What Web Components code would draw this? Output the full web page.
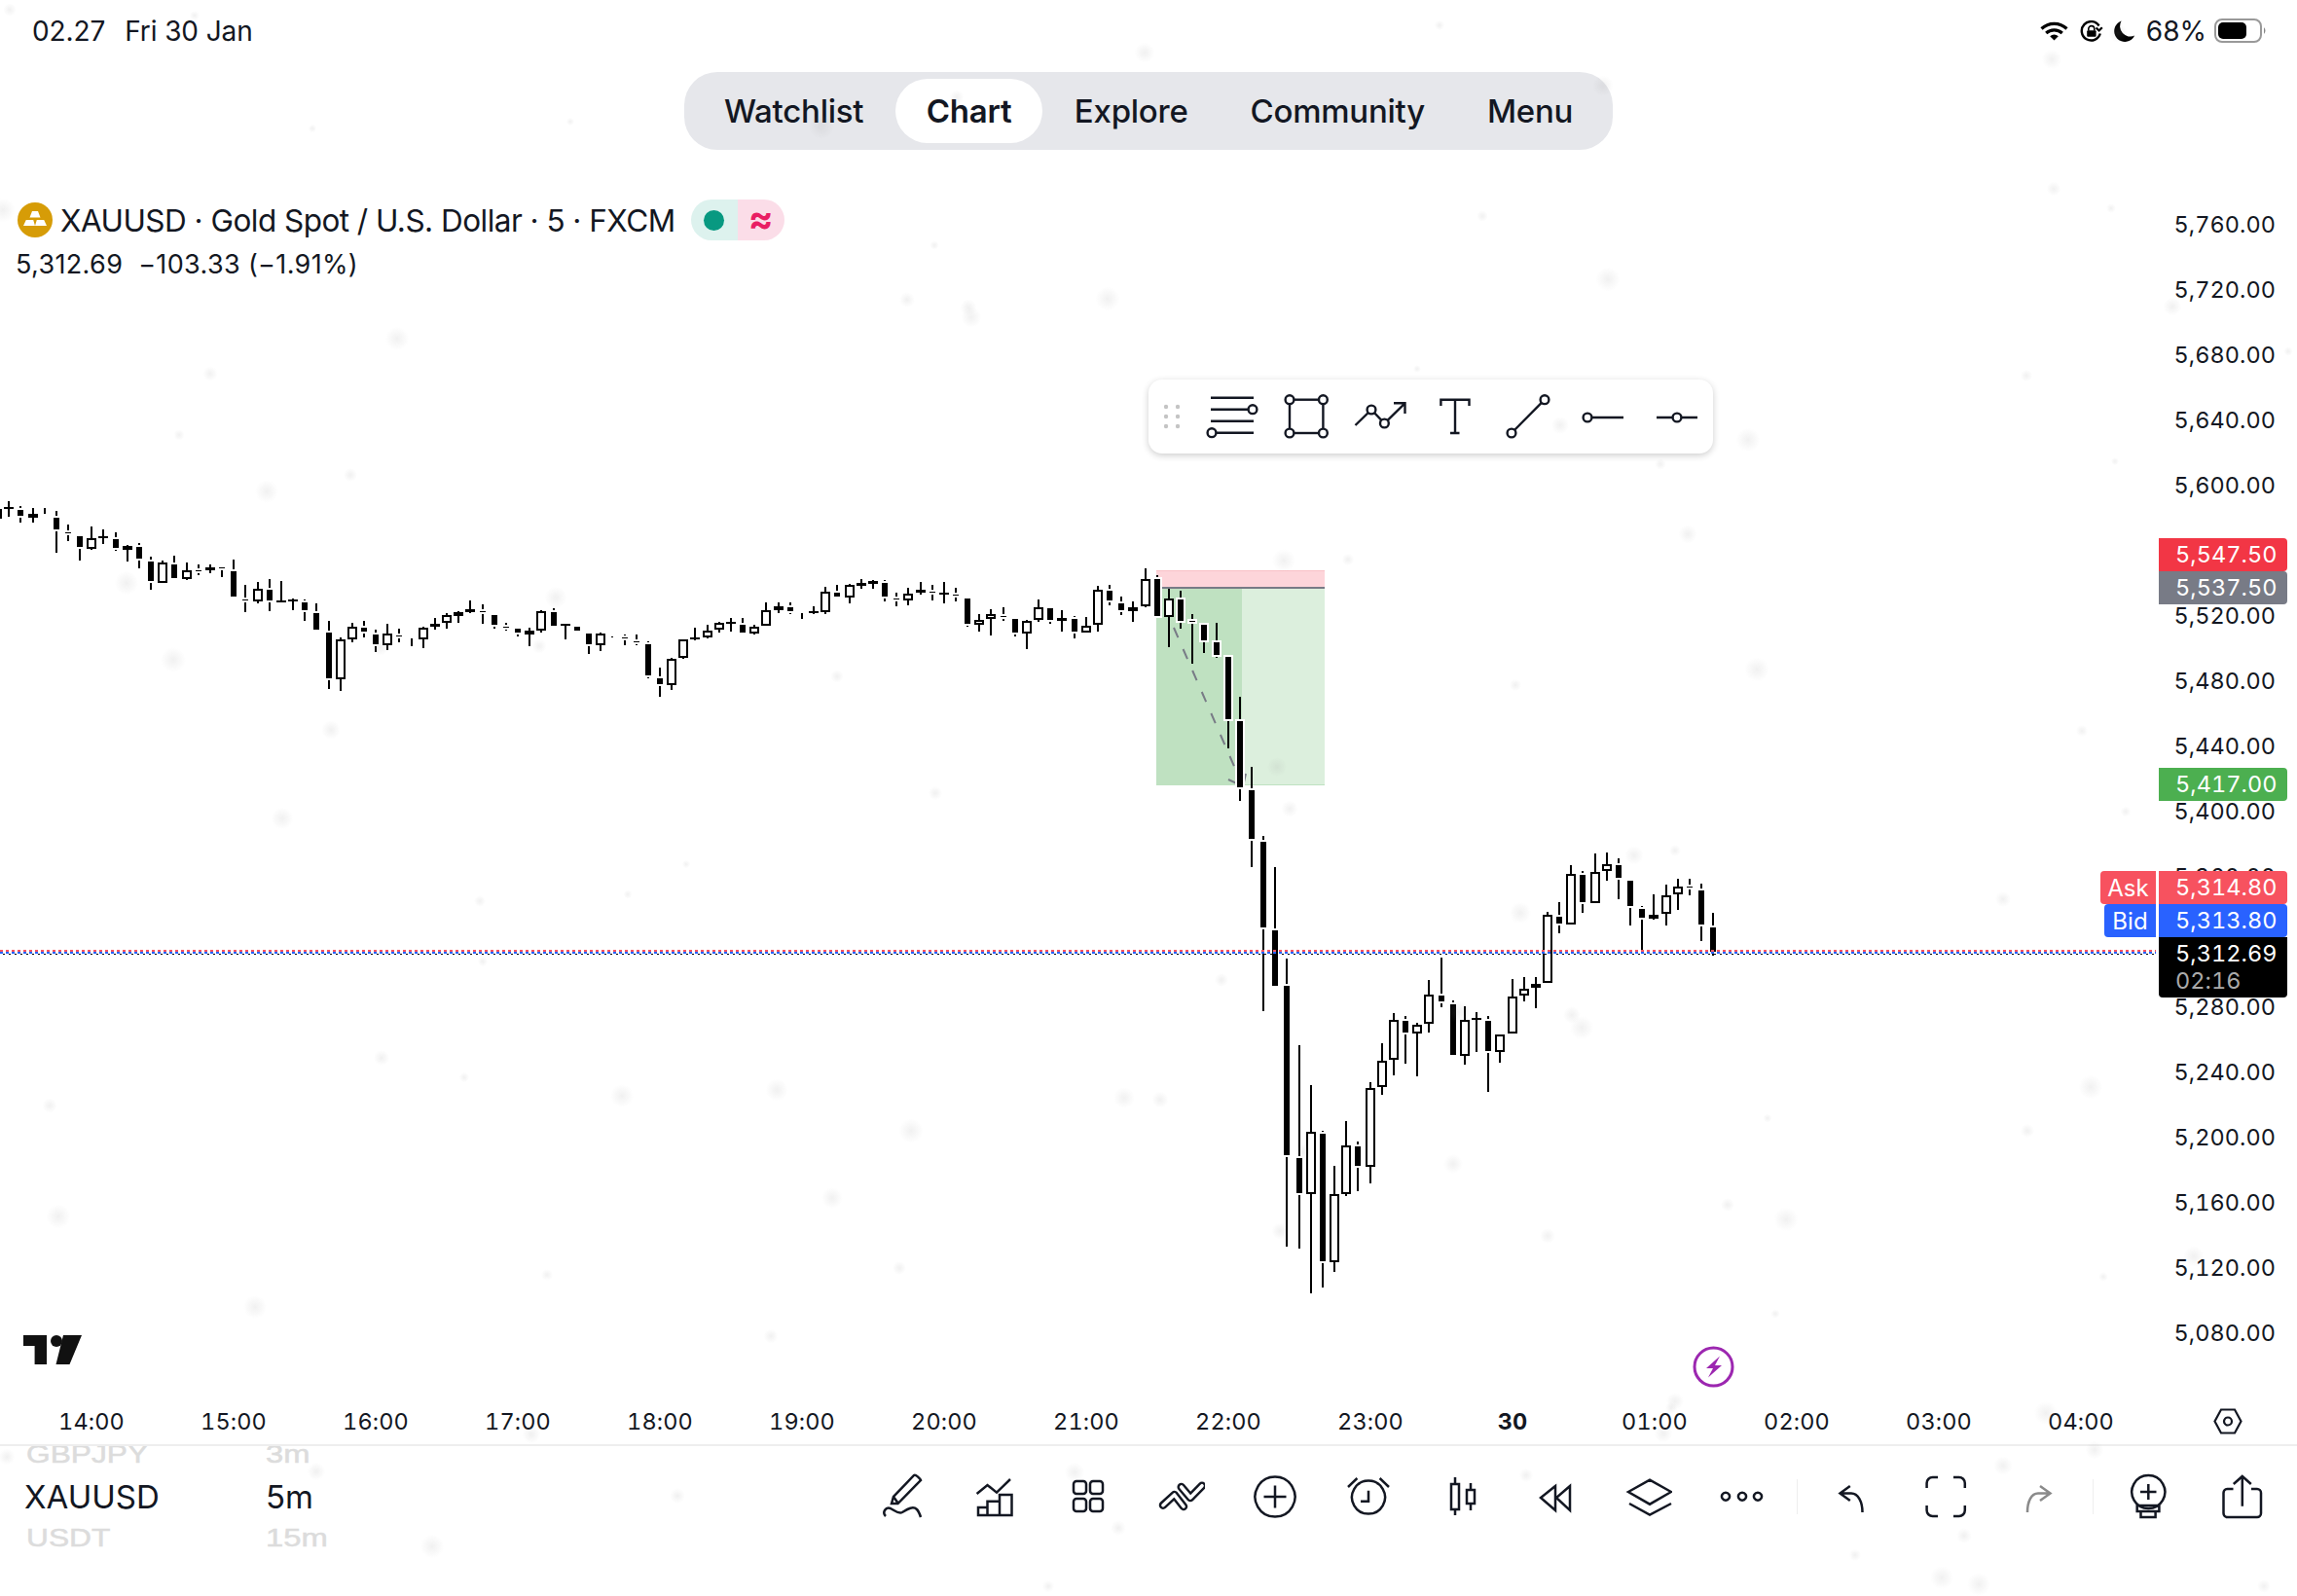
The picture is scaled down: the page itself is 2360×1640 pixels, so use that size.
<!DOCTYPE html>
<html lang="en">
<head>
<meta charset="utf-8">
<title>XAUUSD chart</title>
<style>
	html, body { margin: 0; height: 100%; background: #fff; }
	body {
		color: #131722;
		display: flex;
		flex-direction: column;
		font-family: Inter, "Noto Sans", "Liberation Sans", sans-serif;
		height: 1640px;
		overflow: hidden;
		width: 2360px;
	}
</style>
</head>
<body>
	<status-bar></status-bar>
	<tab-nav active="Chart" items="Watchlist,Chart,Explore,Community,Menu"></tab-nav>
	<chart-pane>
		<chart-canvas></chart-canvas>
		<symbol-legend></symbol-legend>
		<drawing-toolbar></drawing-toolbar>
		<price-axis></price-axis>
	</chart-pane>
	<time-axis></time-axis>
	<bottom-bar></bottom-bar>
	<snow-layer></snow-layer>

<script>
/**
 * Base for the page's elements: renders styles + markup once into an open shadow root.
 */
class ShadowElement extends HTMLElement {
	constructor() {
		super();
		this.attachShadow({mode:'open'});
	}

	connectedCallback() {
		this.shadowRoot.innerHTML = `<style>${this.styles()}</style>${this.markup()}`;
	}

	styles() { return ':host { display: block; }'; }
	markup() { return '<slot></slot>'; }
}

class StatusBar extends ShadowElement {
	styles() {
		return `
			:host {
				align-items: center;
				display: flex;
				flex: none;
				font-size: 28px;
				height: 64px;
				letter-spacing: -.1px;
				padding: 0 33px;
			}
			.time { margin-right: 20px; }
			.right { align-items: center; display: flex; margin-left: auto; margin-right: -3px; }
			svg { display: block; }
		`;
	}

	markup() {
		return `
			<span class="time">02.27</span><span>Fri 30 Jan</span>
			<div class="right">
				<svg width="29" height="20" viewBox="0 0 29 20" fill="none" stroke="#000" stroke-width="3.2">
					<path d="M1.5 7.5 A19 19 0 0 1 27.5 7.5"/>
					<path d="M6.2 12 A12.5 12.5 0 0 1 22.8 12"/>
					<path d="M10.2 15.2 L14.5 19.6 L18.8 15.2 A6.5 6.5 0 0 0 10.2 15.2Z" fill="#000" stroke="none"/>
				</svg>
				<svg style="margin-left:12px" width="24" height="22" viewBox="0 0 24 22" fill="none" stroke="#000" stroke-width="2.4">
					<path d="M20.8 13.5 A9.7 9.7 0 1 1 19.6 5.5"/>
					<path d="M22.8 7.2 L19.6 10.5 L16.6 7.4" stroke-width="2.2"/>
					<path d="M8.8 10.5 V8.6 a3 3 0 0 1 6 0 V10.5" stroke-width="1.6"/>
					<rect x="7.2" y="10.2" width="9.4" height="6.6" rx="1" fill="#000" stroke="none"/>
				</svg>
				<svg style="margin-left:10px" width="23" height="23" viewBox="0 0 23 23">
					<path d="M8.6.6 A11 11 0 1 0 22.2 15.6 A10.6 10.6 0 0 1 8.6.6Z" fill="#000"/>
				</svg>
				<span style="margin-left:11px;letter-spacing:0">68%</span>
				<svg style="margin-left:8px" width="55" height="26" viewBox="0 0 55 26">
					<rect x="1" y="1" width="47" height="23" rx="7" fill="none" stroke="#999" stroke-width="2"/>
					<rect x="4" y="4" width="29" height="17" rx="5" fill="#000"/>
					<path d="M51 9 q3 3.5 0 7Z" fill="#888"/>
				</svg>
			</div>
		`;
	}
}

class TabNav extends ShadowElement {
	styles() {
		return `
			:host {
				display: flex;
				flex: none;
				height: 80px;
				justify-content: center;
				padding-top: 10px;
			}
			.pill {
				align-items: center;
				background: #e6e7eb;
				border-radius: 34px;
				box-sizing: border-box;
				display: flex;
				gap: 1px;
				padding-left: 9.5px;
				width: 954px;
			}
			.tab {
				font-size: 33px;
				font-weight: 500;
				letter-spacing: -.25px;
				line-height: 66px;
				padding: 0 31.5px;
			}
			.tab.on { background: #fff; border-radius: 33px; font-weight: 600; padding: 0 32px; }
		`;
	}

	markup() {
		const active = this.getAttribute('active');
		const tabs = this.getAttribute('items').split(',').map(item =>
			`<span class="tab ${item === active ? 'on' : ''}">${item}</span>`).join('');
		return `<div class="pill">${tabs}</div>`;
	}
}

class ChartPane extends ShadowElement {
	styles() {
		return ':host { display: block; flex: 1; position: relative; }';
	}
}

// Raw readings taken segment by segment: y = y0 + v / scale.
// row = wickTop, wickBottom, bodyTop, bodyBottom, u|d. No body: only a wick.
const CANDLES = [
	{y0: 500, scale: 3, first: -1, rows: [
		[62,105,70,100,'u'],[45,92,62,65,'u'],[60,110,72,90,'d'],[67,110,84,96,'u'],[66,84],[75,203,96,132,'d'],
		[118,167,142,142,'d'],[153,228,153,186,'d'],[124,195,160,191,'u'],[132,177,154,157,'u'],[142,197,162,190,'d'],
		[180,231,182,194,'u'],[175,252,186,222,'d'],[216,318,232,291,'d'],[228,297,235,296,'u'],[213,282,240,282,'d'],
		[235,288,257,286,'u'],[240,273,257,257,'d'],[240,268,250,258,'u'],[243,278,250,250,'d'],[225,340,262,338,'d'],
		[303,387,349,349,'d'],[295,360,314,355,'u'],[285,384,319,351,'d'],[291,356,350,353,'u'],[346,381,347,350,'u'],
		[349,414,358,381,'d'],[360,441,391,441,'d'],[414,624,451,591,'d'],[466,630,472,595,'u'],[420,480,431,472,'u'],
		[414,465,435,447,'d'],[441,510,457,486,'d'],[423,504,452,490,'u'],[438,480,459,459,'d'],[468,492],
		[432,498,434,471,'u'],[405,441,422,433,'u'],[390,438,397,421,'u'],[384,420,387,398,'u'],[351,390,377,388,'u'],
		[363,423,384,384,'d'],[397,438,397,426,'d'],[420,444,432,432,'d'],[438,462,439,450,'d'],[435,492,444,456,'u'],
		[381,450,383,444,'u'],[375,429,387,429,'d'],[423,471,424,427,'u'],[432,444,432,444,'d'],
	]},
	{y0: 550, scale: 3, first: 49, rows: [
		[303,366,304,336,'d'],[300,356,302,340,'u'],[313,315],[306,338,316,316,'d'],[306,338,327,327,'d'],
		[328,440,336,432,'d'],[408,497,441,459,'d'],[377,476,380,463,'u'],[320,380,320,379,'u'],[285,323,314,318,'u'],
		[277,317,293,316,'u'],[268,300,271,292,'u'],[255,296,268,271,'u'],[255,300,277,299,'d'],[275,307,282,304,'u'],
		[208,280,230,280,'u'],[208,240,218,230,'u'],[207,243,222,234,'d'],[240,258],[220,243,234,238,'u'],
		[160,242,173,238,'u'],[153,189,177,189,'d'],[151,209,154,193,'u'],[136,164,148,155,'u'],[138,165,142,150,'u'],
		[139,204,148,189,'d'],[177,219,195,195,'d'],[163,216,180,202,'u'],[144,183,167,178,'u'],[153,201,175,175,'d'],
		[144,210,176,178,'u'],[162,204,183,183,'d'],[195,282,196,272,'d'],[243,297,260,276,'u'],[228,309,242,258,'u'],
		[222,264,248,248,'d'],[258,312,258,300,'d'],[262,351,263,304,'u'],[198,267,221,262,'u'],[225,273,226,261,'d'],
		[231,297,254,265,'u'],[250,318,259,297,'d'],[252,301,279,300,'u'],[157,297,167,276,'u'],[153,216,172,200,'d'],
		[189,246,211,231,'d'],[204,267,221,234,'u'],[102,222,134,219,'u'],
	]},
	{y0: 570, scale: 2, first: 97, rows: [
		[42,128,50,126,'d'],[70,190,90,128,'u'],[74,152,92,136,'d'],[122,224,136,136,'d'],[140,202,144,176,'d'],
		[140,212,180,206,'d'],[210,397,210,338,'d'],[291,506,342,477,'d'],[436,642,484,584,'d'],[577,938,590,766,'d'],
		[641,885,772,885,'d'],
	]},
	{y0: 950, scale: 3, first: 108, rows: [
		[105,992,189,711,'d'],[372,998,720,828,'d'],[495,1136,640,831,'u'],[637,1118,645,1038,'d'],[744,1070,832,1042,'u'],
		[606,838,680,832,'u'],[670,822,685,744,'d'],[487,797,503,747,'u'],[366,524,419,500,'u'],[273,464,293,417,'u'],
		[283,428,297,333,'d'],[304,467,308,337,'u'],[171,332,215,306,'u'],[102,254,219,237,'d'],[235,401,246,401,'d'],
		[252,431,293,406,'u'],[270,392,289,292,'u'],[283,515,297,390,'d'],[338,425,338,394,'u'],[168,337,221,337,'u'],
		[162,236,197,219,'u'],[162,257,182,196,'u'],
	]},
	{y0: 860, scale: 3, first: 130, rows: [
		[232,451,241,451,'u'],[201,297,246,267,'d'],[87,270,113,270,'u'],[105,234,117,201,'d'],[51,205,107,204,'u'],
		[48,135,83,106,'u'],[66,192,87,126,'d'],[135,273,135,213,'d'],[213,354,222,249,'d'],[177,255,240,253,'u'],
		[147,273,179,238,'u'],[129,225,152,178,'u'],[129,180,154,154,'d'],[144,321,165,270,'d'],[234,366,279,355,'d'],
	]},
];

class ChartCanvas extends ShadowElement {
	styles() {
		return `
			:host { display: block; inset: 0; position: absolute; }
			svg { display: block; }
		`;
	}

	candle(k, y0, scale, [wickTop, wickBottom, bodyTop, bodyBottom, dir]) {
		const x = Math.round(9.2 + 12.16 * k);
		const py = v => Math.round(y0 + v / scale);
		let out = `<rect x="${x - 1}" y="${py(wickTop)}" width="2" height="${py(wickBottom) - py(wickTop)}" fill="#000"/>`;
		if (!dir) return out;
		const top = py(bodyTop);
		const height = Math.max(py(bodyBottom) - top, 1);
		if (dir === 'd') {
			out += `<rect x="${x - 5}" y="${top - 2}" width="10" height="${height + 4}" fill="#fff"/>`;
			out += `<rect x="${x - 3}" y="${top}" width="6" height="${height}" fill="#000"/>`;
		} else if (height < 5) {
			out += `<rect x="${x - 5}" y="${top}" width="10" height="${Math.max(height, 2)}" fill="#000"/>`;
		} else {
			out += `<rect x="${x - 5}" y="${top}" width="10" height="${height}" fill="#000"/>`;
			out += `<rect x="${x - 3}" y="${top + 2}" width="6" height="${height - 4}" fill="#fff"/>`;
		}
		return out;
	}

	markup() {
		const candles = CANDLES.map(seg => seg.rows.map((row, i) =>
			this.candle(seg.first + i, seg.y0, seg.scale, row)).join('')).join('');
		return `
			<svg width="2360" height="1281" viewBox="0 154 2360 1281">
				<g shape-rendering="crispEdges">
					<rect x="1188" y="587" width="173" height="16" fill="#fdd5da"/>
					<rect x="1188" y="586" width="173" height="1" fill="#f9c0c6"/>
					<rect x="1188" y="605" width="88" height="201" fill="#bfe1c1"/>
					<rect x="1276" y="605" width="85" height="201" fill="#dcefdd"/>
					<rect x="1188" y="806" width="173" height="1" fill="#bfe1c1"/>
					<rect x="1188" y="603" width="173" height="2" fill="#787b86"/>
				</g>
				<path d="M1206 645 L1277 808" stroke="#787b86" stroke-width="2" stroke-dasharray="11 13" fill="none"/>
				<path d="M1262 801 L1277 808 L1280 795" stroke="#787b86" stroke-width="2" fill="none"/>
				<g shape-rendering="crispEdges">${candles}
					<path d="M0 977 H2215" stroke="#f7525f" stroke-width="2" stroke-dasharray="3 3"/>
					<path d="M0 979 H2215" stroke="#2962ff" stroke-width="2" stroke-dasharray="3 3"/>
					<path d="M3 980.5 H2215" stroke="#000" stroke-width="1" stroke-dasharray="2 4"/>
				</g>
				<path d="M24 1372 H48 V1402 H35.6 V1383 H24Z M65 1372 H84 L71.5 1402 H57.5Z" fill="#111"/>
				<circle cx="58" cy="1378" r="6" fill="#111"/>
				<circle cx="1760.5" cy="1404.6" r="19.5" fill="none" stroke="#9c27b0" stroke-width="3"/>
				<path d="M1767 1393.5 L1753 1406 H1760 L1755 1415.5 L1769 1403 H1762Z" fill="#9c27b0"/>
			</svg>
		`;
	}
}

class SymbolLegend extends ShadowElement {
	styles() {
		return `
			:host { display: block; left: 17px; position: absolute; top: 54px; }
			.title { align-items: center; display: flex; height: 36px; }
			.name { font-size: 31.5px; letter-spacing: -.53px; margin-left: 8px; white-space: nowrap; }
			svg { display: block; margin-left: 1px; }
			.flags { border-radius: 21px; display: flex; height: 42px; margin-left: 16px; overflow: hidden; }
			.flags span { align-items: center; display: flex; justify-content: center; width: 48px; }
			.open { background: #ddf2ee; }
			.open i { background: #089981; border-radius: 50%; height: 21px; width: 21px; }
			.delay { background: #fbdde8; color: #e91e63; font-size: 38px; font-weight: 700; line-height: 38px; padding-bottom: 4px; }
			.values { font-size: 27px; letter-spacing: .35px; margin-left: -1px; margin-top: 11px; white-space: pre; }
		`;
	}

	markup() {
		return `
			<div class="title">
				<svg width="36" height="36" viewBox="0 0 36 36">
					<circle cx="18" cy="18" r="18" fill="#d69c07"/>
					<path d="M15 9 H21 L23.5 15.5 H12.5Z M8.8 18 H16.2 L18 24 H6Z M19.8 18 H27.2 L30 24 H18Z" fill="#fff"/>
				</svg>
				<span class="name">XAUUSD · Gold Spot / U.S. Dollar · 5 · FXCM</span>
				<div class="flags"><span class="open"><i></i></span><span class="delay">≈</span></div>
			</div>
			<div class="values">5,312.69  −103.33 (−1.91%)</div>
		`;
	}
}

const ring = (cx, cy) => `<circle cx="${cx}" cy="${cy}" r="4.4" fill="#fff"/>`;

const DRAW_TOOLS = [
	`<path d="M16 18.7 H60 M16 30.7 H55 M16 42.7 H60 M21 54.7 H60"/>${ring(59, 30.7)}${ring(17, 54.7)}`,
	`<rect x="21" y="20.7" width="34.4" height="34.3"/>${ring(21, 20.7)}${ring(55.4, 20.7)}${ring(21, 55)}${ring(55.4, 55)}`,
	`<path d="M12.5 47 L29 31 L42.4 45 L63.5 24.3 M52 24.3 H63.5 V35"/>${ring(29, 31)}${ring(42.4, 45)}`,
	`<path d="M24.4 27 V20.7 H53.5 V27 M39 20.7 V55 M34 55 H43.5"/>`,
	`<path d="M55 20.7 L21 55"/>${ring(55, 20.7)}${ring(21, 55)}`,
	`<path d="M23 39 H60"/>${ring(23, 39)}`,
	`<path d="M18 39 H60"/>${ring(39, 39)}`,
];

class DrawingToolbar extends ShadowElement {
	styles() {
		return `
			:host {
				background: #fff;
				border-radius: 14px;
				box-shadow: 0 2px 7px rgba(0,0,0,.2);
				display: flex;
				height: 76px;
				left: 1180px;
				position: absolute;
				top: 236px;
				width: 580px;
			}
			.grip { flex: none; height: 76px; width: 48px; }
			svg { display: block; flex: none; }
			.tool { fill: none; stroke: #131722; stroke-width: 2.4; }
		`;
	}

	markup() {
		const tools = DRAW_TOOLS.map(body => `<svg class="tool" width="76" height="76" viewBox="0 0 76 76">${body}</svg>`).join('');
		const dots = [28, 38, 48].map(y => `<circle cx="18" cy="${y}" r="2.2"/><circle cx="30" cy="${y}" r="2.2"/>`).join('');
		return `<svg class="grip" viewBox="0 0 48 76" fill="#c4c4c4">${dots}</svg>${tools}`;
	}
}

const PRICE_TICKS = [
	['5,760.00', 230], ['5,720.00', 297], ['5,680.00', 364], ['5,640.00', 431], ['5,600.00', 498],
	['5,520.00', 632], ['5,480.00', 699], ['5,440.00', 766], ['5,400.00', 833], ['5,360.00', 900],
	['5,280.00', 1034], ['5,240.00', 1101], ['5,200.00', 1168], ['5,160.00', 1235], ['5,120.00', 1302], ['5,080.00', 1369],
];

const PRICE_TAGS = [
	['5,547.50', 553, '#f23645'], ['5,537.50', 587, '#787b86'], ['5,417.00', 789, '#4caf50'],
	['5,314.80', 895, '#f7525f'], ['5,313.80', 929, '#2962ff'],
];

class PriceAxis extends ShadowElement {
	styles() {
		return `
			:host { display: block; inset: 0; pointer-events: none; position: absolute; }
			div { font-size: 23.5px; font-variant-numeric: tabular-nums; letter-spacing: .05px; position: absolute; white-space: nowrap; }
			.tick { color: #131722; line-height: 34px; right: 22px; }
			.tag {
				border-radius: 0 4px 4px 0;
				box-sizing: border-box;
				color: #fff;
				height: 34px;
				left: 2218px;
				line-height: 34px;
				padding-left: 17px;
				width: 132px;
			}
			.side { border-radius: 4px 0 0 4px; color: #fff; font-size: 24px; height: 34px; line-height: 36px; text-align: center; }
			.last {
				background: #000;
				border-radius: 0 0 4px 4px;
				box-sizing: border-box;
				color: #fff;
				height: 62px;
				left: 2218px;
				line-height: 28px;
				padding: 3px 0 0 17px;
				top: 809px;
				width: 132px;
			}
			.last span { color: #aaa; display: block; }
		`;
	}

	markup() {
		const ticks = PRICE_TICKS.map(([text, y]) =>
			`<div class="tick" style="top:${y - 154 - 16}px">${text}</div>`).join('');
		const tags = PRICE_TAGS.map(([text, y, color]) =>
			`<div class="tag" style="top:${y - 154}px;background:${color}">${text}</div>`).join('');
		return `${ticks}${tags}
			<div class="side" style="left:2158px;width:57px;top:741px;background:#f7525f">Ask</div>
			<div class="side" style="left:2162px;width:53px;top:775px;background:#2962ff">Bid</div>
			<div class="last">5,312.69<span>02:16</span></div>`;
	}
}

class TimeAxis extends ShadowElement {
	styles() {
		return `
			:host {
				align-items: center;
				border-bottom: 2px solid #eee;
				box-sizing: border-box;
				display: flex;
				flex: none;
				font-size: 23.5px;
				font-variant-numeric: tabular-nums;
				height: 52px;
				letter-spacing: .1px;
				padding: 2px 0 0 21px;
			}
			span { flex: none; text-align: center; width: 146px; }
			b { font-weight: 700; }
			svg { display: block; margin-left: 63px; }
		`;
	}

	markup() {
		const labels = ['14:00','15:00','16:00','17:00','18:00','19:00','20:00','21:00','22:00','23:00','<b>30</b>','01:00','02:00','03:00','04:00'];
		return `${labels.map(label => `<span>${label}</span>`).join('')}
			<svg width="30" height="27" viewBox="0 0 30 27" fill="none" stroke="#131722" stroke-width="2.2">
				<path d="M8 1.5 H22 L28.5 13.5 L22 25.5 H8 L1.5 13.5Z"/>
				<circle cx="15" cy="13.5" r="4"/>
			</svg>`;
	}
}

// Paths are drawn in a 48 box, centred on the toolbar's middle line.
const BAR_ICONS = [
	['M13 31 L15 24 L36 2 C38 1 42 5 43 7 L19.5 31Z M15 24 L20 31', 'M7 44 C3 40 7 34 12 36 C16 38 20 42 24 40 C29 37 35 33 39 37 C41 39 42 42 43 45'],
	['M5.6 21 L16.5 12 L26 19.7 L40 6', 'M7 43 V35 H16.5 V28.7 H29 V22 H41.5 V43Z M16.5 35 V43 M29 28.7 V43'],
	['M12 8 H19 a3 3 0 0 1 3 3 V18 a3 3 0 0 1 -3 3 H12 a3 3 0 0 1 -3 -3 V11 a3 3 0 0 1 3 -3Z M29 8 H36 a3 3 0 0 1 3 3 V18 a3 3 0 0 1 -3 3 H29 a3 3 0 0 1 -3 -3 V11 a3 3 0 0 1 3 -3Z M12 26 H19 a3 3 0 0 1 3 3 V36 a3 3 0 0 1 -3 3 H12 a3 3 0 0 1 -3 -3 V29 a3 3 0 0 1 3 -3Z M29 26 H36 a3 3 0 0 1 3 3 V36 a3 3 0 0 1 -3 3 H29 a3 3 0 0 1 -3 -3 V29 a3 3 0 0 1 3 -3Z'],
	null,
	['M24 3.5 a20.5 20.5 0 1 0 .01 0Z M24 12.5 V35.5 M12.5 24 H35.5'],
	['M24 7.5 a17 17 0 1 0 .01 0Z M24 17.7 V28.7 H16 M3 14 L12.4 5 M45 14 L35.6 5'],
	['M13 11 H21 V37 H13Z M17 4 V11 M17 37 V43 M29 17 H37 V31 H29Z M33 10 V17 M33 31 V38'],
	['M24 13 L9 25 L24 38Z M39 13 L25 25 L39 38Z'],
	['M3 19 L25 6.7 L47 19 L25 31.7Z M4 31 L25 42.7 L47 31'],
	['M7 19.7 a4 4 0 1 0 .01 0Z M24 19.7 a4 4 0 1 0 .01 0Z M40 19.7 a4 4 0 1 0 .01 0Z'],
	'|',
	['M35.5 40 C35.5 29 31 20.5 24 20.5 H13 M22.8 13 L12.5 20.5 L22.8 28'],
	['M5.6 15 V10 a6 6 0 0 1 6 -6 H17 M33 4 H38.8 a6 6 0 0 1 6 6 V15 M44.8 33 V38 a6 6 0 0 1 -6 6 H33 M17 44 H11.6 a6 6 0 0 1 -6 -6 V33'],
	['M13 40 C13 29 17 20.5 24 20.5 H36 M26 13 L36.5 20.5 L26 28', '#8a8a8a'],
	'|',
	['M24.3 2 a17 17 0 1 0 .01 0Z M24.3 11 V27 M16 19 H32.5 M12.7 33 H35.4 V39 H12.7Z M16.5 39 H31.6 V45 H16.5Z'],
	['M15.5 16 H9.5 a4 4 0 0 0 -4 4 V41 a4 4 0 0 0 4 4 H40 a4 4 0 0 0 4 -4 V20 a4 4 0 0 0 -4 -4 H34 M24.8 3 V33.7 M15.8 11 L24.8 3 L33.8 11'],
];

class BottomBar extends ShadowElement {
	styles() {
		return `
			:host { display: flex; flex: none; height: 154px; overflow: hidden; }
			.wheel { flex: none; font-size: 33px; margin-top: -12px; }
			.wheel div { height: 43px; line-height: 43px; white-space: nowrap; }
			.wheel .far {
				color: #dcdcdc;
				font-family: "Liberation Sans", Arial, sans-serif;
				font-size: 26px;
				line-height: 41px;
				padding-left: 2px;
				transform: scaleX(1.22);
				transform-origin: 2px 0;
				-webkit-text-stroke: .5px #dcdcdc;
			}
			.wheel .far.b { padding-left: 0; transform: scaleX(1.26); transform-origin: 0 0; }
			.tools { align-items: flex-start; display: flex; margin-left: auto; padding: 28px 9px 0 0; }
			.tool { display: flex; flex: none; justify-content: center; width: 95.9px; }
			.sep { background: #eee; flex: none; height: 36px; margin: 6px 8px 0; width: 1px; }
			svg { display: block; fill: none; stroke: #131722; stroke-width: 2.5; }
		`;
	}

	icon(icon) {
		if (icon === '|') return '<div class="sep"></div>';
		if (!icon) {
			return `<div class="tool"><svg width="48" height="48" viewBox="0 0 48 48">
				<g stroke-linecap="round" stroke-linejoin="round">
					<path d="M5 32.7 L16.6 22 L26 34 M23.7 14 L33 25 L45 12.7" stroke-width="8.5"/>
					<path d="M5 32.7 L16.6 22 L26 34 M23.7 14 L33 25 L45 12.7" stroke="#fff" stroke-width="3.6"/>
				</g>
			</svg></div>`;
		}
		const [first, second] = icon;
		const isColor = second && second.startsWith('#');
		const stroke = isColor ? `style="stroke:${second}"` : '';
		const extra = second && !isColor ? `<path d="${second}"/>` : '';
		return `<div class="tool"><svg width="48" height="48" viewBox="0 0 48 48" ${stroke}><path d="${first}"/>${extra}</svg></div>`;
	}

	markup() {
		return `
			<div class="wheel" style="width:249px;padding-left:25px">
				<div class="far">GBPJPY</div><div>XAUUSD</div><div class="far">USDT</div>
			</div>
			<div class="wheel" style="width:150px;margin-left:-1px">
				<div class="far b">3m</div><div>5m</div><div class="far b">15m</div>
			</div>
			<div class="tools">${BAR_ICONS.map(icon => this.icon(icon)).join('')}</div>
		`;
	}
}

// Faint falling-snow specks over the whole capture; seeded so the picture is stable.
class SnowLayer extends ShadowElement {
	styles() {
		return `
			:host { display: block; inset: 0; pointer-events: none; position: fixed; }
			svg { display: block; }
		`;
	}

	markup() {
		let seed = 7;
		const next = () => (seed = (seed * 16807) % 2147483647) / 2147483647;
		let spots = '';
		for (let i = 0; i < 110; i++) {
			const r = 4 + next() * 9;
			spots += `<circle cx="${(next() * 2360).toFixed(0)}" cy="${(next() * 1640).toFixed(0)}" r="${r.toFixed(1)}" fill="url(#speck)"/>`;
		}
		return `<svg width="2360" height="1640">
			<defs><radialGradient id="speck">
				<stop offset="0" stop-color="#999" stop-opacity=".14"/>
				<stop offset="1" stop-color="#999" stop-opacity="0"/>
			</radialGradient></defs>${spots}</svg>`;
	}
}

customElements.define('status-bar', StatusBar);
customElements.define('tab-nav', TabNav);
customElements.define('chart-pane', ChartPane);
customElements.define('chart-canvas', ChartCanvas);
customElements.define('symbol-legend', SymbolLegend);
customElements.define('drawing-toolbar', DrawingToolbar);
customElements.define('price-axis', PriceAxis);
customElements.define('time-axis', TimeAxis);
customElements.define('bottom-bar', BottomBar);
customElements.define('snow-layer', SnowLayer);
</script>
</body>
</html>
